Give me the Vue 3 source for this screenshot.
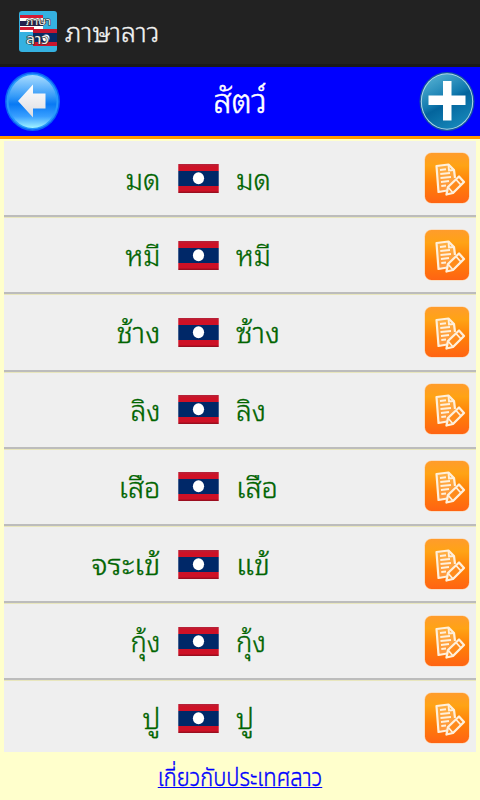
<script setup>
import { ref } from 'vue';

const title = 'ภาษาลาว';
const category = 'สัตว์';

const words = ref([
  { id: 1, thai: 'มด', thaiWidth: 35, lao: 'มด', laoWidth: 35 },
  { id: 2, thai: 'หมี', thaiWidth: 35, lao: 'หมี', laoWidth: 35 },
  { id: 3, thai: 'ช้าง', thaiWidth: 44, lao: 'ซ้าง', laoWidth: 44 },
  { id: 4, thai: 'ลิง', thaiWidth: 30, lao: 'ลิง', laoWidth: 30 },
  { id: 5, thai: 'เสือ', thaiWidth: 42, lao: 'เสือ', laoWidth: 42 },
  { id: 6, thai: 'จระเข้', thaiWidth: 69, lao: 'แข้', laoWidth: 34 },
  { id: 7, thai: 'กุ้ง', thaiWidth: 30, lao: 'กุ้ง', laoWidth: 30 },
  { id: 8, thai: 'ปู', thaiWidth: 18, lao: 'ปู', laoWidth: 18 },
]);
</script>

<template>
  <div class="screen">
    <svg class="defs" width="0" height="0" aria-hidden="true">
      <defs>
        <linearGradient id="edit-bg" x1="0" y1="0" x2="0" y2="1">
          <stop offset="0" stop-color="#ff9c2c" />
          <stop offset="0.25" stop-color="#ffa315" />
          <stop offset="0.6" stop-color="#ff8008" />
          <stop offset="1" stop-color="#ff6413" />
        </linearGradient>
        <linearGradient id="flag-red" x1="0" y1="0" x2="0" y2="1">
          <stop offset="0" stop-color="#b3243a" />
          <stop offset="0.1" stop-color="#ce1126" />
          <stop offset="0.92" stop-color="#ce1126" />
          <stop offset="1" stop-color="#8d0d1d" />
        </linearGradient>
      </defs>
    </svg>

    <header class="action-bar">
      <svg class="app-icon" viewBox="0 0 38 41">
        <rect width="38" height="41" rx="3" fill="#35b1e1" />
        <rect x="1" y="4" width="23" height="17" fill="#fff" />
        <rect x="1" y="4" width="23" height="3" fill="#d51c35" />
        <rect x="1" y="10" width="23" height="5" fill="#25204f" />
        <rect x="1" y="16" width="14" height="3" fill="#d51c35" />
        <rect x="14" y="18" width="24" height="17" fill="#c8152e" />
        <rect x="14" y="22" width="24" height="9" fill="#062b66" />
        <circle cx="27" cy="27" r="3.5" fill="#fff" />
        <text class="app-icon-text" x="7" y="14" textLength="25" lengthAdjust="spacingAndGlyphs">ภาษา</text>
        <text class="app-icon-text large" x="7" y="33" textLength="23" lengthAdjust="spacingAndGlyphs">ลาว</text>
      </svg>
      <h1 class="app-title">{{ title }}</h1>
    </header>

    <nav class="category-bar">
      <button type="button" class="round-btn" aria-label="Back">
        <svg viewBox="0 0 56 60">
          <defs>
            <linearGradient id="back-bg" x1="0" y1="0" x2="0" y2="1">
              <stop offset="0" stop-color="#a9dcff" />
              <stop offset="0.4" stop-color="#359bf8" />
              <stop offset="0.55" stop-color="#0879f4" />
              <stop offset="0.78" stop-color="#389fff" />
              <stop offset="1" stop-color="#a2f4ff" />
            </linearGradient>
            <linearGradient id="arrow-fill" x1="0" y1="0" x2="0" y2="1">
              <stop offset="0" stop-color="#fff" />
              <stop offset="1" stop-color="#dcdce1" />
            </linearGradient>
          </defs>
          <ellipse cx="27.5" cy="29.5" rx="27.5" ry="29.5" fill="#0b61f5" />
          <ellipse cx="27.5" cy="29.5" rx="26" ry="28" fill="#2698fb" />
          <ellipse cx="27.5" cy="29.5" rx="24" ry="26.5" fill="url(#back-bg)" />
          <path d="M13 29 L28 12.5 V21.5 H40.5 V36.5 H28 V45.5 Z" fill="url(#arrow-fill)" />
        </svg>
      </button>
      <h2 class="category-title">{{ category }}</h2>
      <button type="button" class="round-btn" aria-label="Add">
        <svg viewBox="0 0 56 60">
          <defs>
            <linearGradient id="add-bg" x1="0.2" y1="0" x2="0.7" y2="1">
              <stop offset="0" stop-color="#54b0d2" />
              <stop offset="0.45" stop-color="#137baf" />
              <stop offset="0.55" stop-color="#03649c" />
              <stop offset="1" stop-color="#1688ba" />
            </linearGradient>
          </defs>
          <ellipse cx="28" cy="29.5" rx="27.5" ry="29.5" fill="#13569e" />
          <ellipse cx="28" cy="29.5" rx="26.2" ry="28.2" fill="#b0d8e8" />
          <ellipse cx="28" cy="29.5" rx="25.2" ry="27.2" fill="url(#add-bg)" />
          <path d="M24 9 H32.5 V23.5 H46.5 V33 H32.5 V48.5 H24 V33 H9.5 V23.5 H24 Z" fill="#fff" />
        </svg>
      </button>
    </nav>

    <ul class="word-list">
      <li v-for="word in words" :key="word.id" class="word-row">
        <svg class="word thai" viewBox="0 0 157 60">
          <text x="156.5" y="41" :textLength="word.thaiWidth" lengthAdjust="spacingAndGlyphs">{{ word.thai }}</text>
        </svg>
        <svg class="flag" viewBox="0 0 41 29">
          <rect width="41" height="29" fill="url(#flag-red)" />
          <rect y="7" width="41" height="15" fill="#002868" />
          <ellipse cx="20.5" cy="14.3" rx="5.6" ry="6" fill="#fff" />
          <path d="M0.5 0 V29 M40.5 0 V29" stroke="#fff" stroke-opacity="0.25" />
        </svg>
        <svg class="word lao" viewBox="0 0 157 60">
          <text x="0" y="41" :textLength="word.laoWidth" lengthAdjust="spacingAndGlyphs">{{ word.lao }}</text>
        </svg>
        <button type="button" class="edit-btn" aria-label="Edit">
          <svg viewBox="0 0 46 52">
            <rect x="0.5" y="0.5" width="45" height="51" rx="7" fill="#ffd0a0" />
            <rect x="1" y="1" width="44" height="50" rx="6.5" fill="url(#edit-bg)" />
            <path
              d="M26 38 L14.5 40 L12.5 14 L24.5 12.5 L30 18 L31 26"
              fill="#ffc27a"
              fill-opacity="0.45"
              stroke="#fff0dc"
              stroke-width="2.2"
              stroke-linejoin="round"
            />
            <path
              d="M16 18 L22 17.3 M16.3 22 L26 21 M16.5 26 L27 25 M17 30 L25 29 M17.3 34 L22 33.5 M24.5 12.5 L25 18.5 L30 18"
              fill="none"
              stroke="#fff0dc"
              stroke-width="1.9"
            />
            <path
              d="M24 35 L35 24.5 L40 30 L29 41 L22.5 42.5 Z"
              fill="#ff8b1c"
              stroke="#fff0dc"
              stroke-width="2.3"
              stroke-linejoin="round"
            />
            <path d="M32 27.5 L37 33 M24 35 L29 41" stroke="#fff0dc" stroke-width="1.8" />
          </svg>
        </button>
      </li>
    </ul>

    <footer class="footer">
      <a href="#" class="about-link">เกี่ยวกับประเทศลาว</a>
    </footer>
  </div>
</template>

<style>
body {
  background-color: #ffffcc;
}
</style>

<style scoped>
.screen {
  display: flex;
  flex-direction: column;
  width: 480px;
  height: 800px;
  overflow: hidden;
  background-color: #ffffcc;
  font-family: 'Noto Sans Thai Looped', Loma, Garuda, Waree, Umpush, 'Noto Serif Thai', 'Liberation Sans', sans-serif;
}

.defs {
  display: block;
  flex: none;
}

.action-bar {
  display: flex;
  align-items: center;
  flex: none;
  box-sizing: border-box;
  height: 67px;
  padding: 1px 19px 2px;
  gap: 8px;
  background-color: #222;
  border-bottom: 3px solid #1a1a1a;
}

.app-icon {
  flex: none;
  width: 38px;
  height: 41px;
}

.app-icon-text {
  font-family: 'Noto Sans Thai', 'Noto Sans', sans-serif;
  font-size: 11px;
  fill: #eee;
  stroke: #333;
  stroke-width: 1.2px;
  paint-order: stroke;
}

.app-icon-text.large {
  font-size: 14px;
}

.app-title {
  margin: 0;
  padding-bottom: 4px;
  font-size: 27px;
  font-weight: 300;
  line-height: 40px;
  color: #f3f3f3;
  -webkit-text-stroke: 0.3px #f3f3f3;
}

.category-bar {
  display: flex;
  align-items: center;
  justify-content: space-between;
  flex: none;
  box-sizing: border-box;
  height: 72px;
  padding: 0 5px;
  background-color: #0000ff;
  border-bottom: 3px solid #ff9900;
}

.category-title {
  margin: 0;
  padding-bottom: 6px;
  font-size: 33px;
  font-weight: 300;
  line-height: 60px;
  color: #fff;
  -webkit-text-stroke: 0.5px #fff;
}

.round-btn,
.edit-btn {
  flex: none;
  padding: 0;
  background: none;
  border: none;
  cursor: pointer;
}

.round-btn {
  width: 56px;
  height: 60px;
}

.round-btn svg,
.edit-btn svg {
  display: block;
  width: 100%;
  height: 100%;
}

.word-list {
  flex: none;
  margin: 2px 4px 0;
  padding: 0;
  list-style: none;
}

.word-row {
  display: grid;
  grid-template-columns: 157px 41px 1fr 46px;
  column-gap: 17px;
  align-items: center;
  box-sizing: border-box;
  height: 77.2px;
  padding-right: 6px;
  background-color: #efefef;
  border-bottom: 2px solid #bcbcbc;
}

.word-row:first-child {
  height: 76.2px;
  padding-top: 1px;
}

.word-row + .word-row {
  border-top: 1px solid #e8e6bd;
}

.word-row:last-child {
  height: 71.2px;
  padding-top: 4px;
  border-bottom: none;
}

.word {
  display: block;
  width: 157px;
  height: 60px;
  font-size: 28px;
  font-weight: 300;
  fill: #006400;
  stroke: #006400;
  stroke-width: 0.35px;
}

.thai {
  text-anchor: end;
}

.flag {
  display: block;
  width: 41px;
  height: 29px;
}

.edit-btn {
  width: 46px;
  height: 52px;
  margin-bottom: 1px;
}

.footer {
  display: flex;
  align-items: center;
  justify-content: center;
  flex: 1;
}

.about-link {
  padding-top: 5px;
  font-family: 'Noto Sans Thai', 'Noto Sans', sans-serif;
  font-size: 25px;
  font-weight: 300;
  color: #0000ff;
  white-space: nowrap;
  text-decoration-thickness: 1.4px;
  -webkit-text-stroke: 0.4px #0000ff;
  transform: scaleX(0.875);
}
</style>
